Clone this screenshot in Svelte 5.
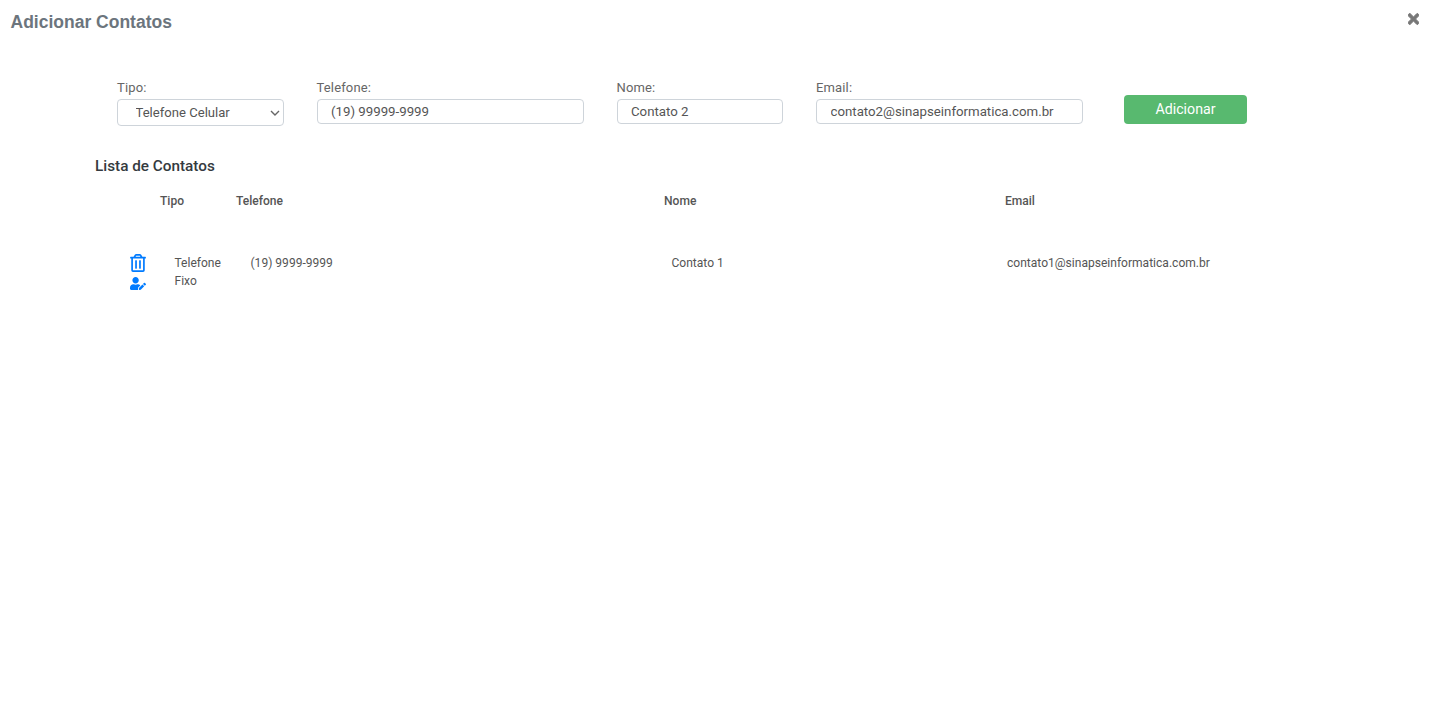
<script>
	let tipo = $state('Telefone Celular');
	let telefone = $state('(19) 99999-9999');
	let nome = $state('Contato 2');
	let email = $state('contato2@sinapseinformatica.com.br');

	const contatos = [
		{ tipo: 'Telefone Fixo', telefone: '(19) 9999-9999', nome: 'Contato 1', email: 'contato1@sinapseinformatica.com.br' }
	];
</script>

<div class="modal">
	<header>
		<h1>Adicionar Contatos</h1>
		<button class="close" aria-label="Fechar">
			<svg viewBox="0 0 352 512" width="11" height="16">
				<path fill="currentColor" stroke="currentColor" stroke-width="30" d="M242.72 256l100.07-100.07c12.28-12.28 12.28-32.19 0-44.48l-22.24-22.24c-12.28-12.28-32.19-12.28-44.48 0L176 189.28 75.93 89.21c-12.28-12.28-32.19-12.28-44.48 0L9.21 111.45c-12.28 12.28-12.28 32.19 0 44.48L109.28 256 9.21 356.07c-12.28 12.28-12.28 32.19 0 44.48l22.24 22.24c12.28 12.28 32.2 12.28 44.48 0L176 322.72l100.07 100.07c12.28 12.28 32.2 12.28 44.48 0l22.24-22.24c12.28-12.28 12.28-32.19 0-44.48L242.72 256z" />
			</svg>
		</button>
	</header>

	<form class="form">
		<label class="w-small">
			Tipo:
			<select bind:value={tipo}>
				<option>Telefone Celular</option>
				<option>Telefone Fixo</option>
			</select>
		</label>
		<label class="w-large">
			Telefone:
			<input type="text" bind:value={telefone} />
		</label>
		<label class="w-small">
			Nome:
			<input type="text" bind:value={nome} />
		</label>
		<label class="w-large">
			Email:
			<input type="text" bind:value={email} />
		</label>
		<button type="button" class="add">Adicionar</button>
	</form>

	<section class="list">
		<h2>Lista de Contatos</h2>
		<div class="row head">
			<span></span>
			<span>Tipo</span>
			<span>Telefone</span>
			<span>Nome</span>
			<span>Email</span>
		</div>
		{#each contatos as c}
			<div class="row item">
				<div class="actions">
					<svg viewBox="0 0 448 512" width="16" height="18">
						<path fill="currentColor" d="M268 416h24a12 12 0 0 0 12-12V188a12 12 0 0 0-12-12h-24a12 12 0 0 0-12 12v216a12 12 0 0 0 12 12zM432 80h-82.41l-34-56.7A48 48 0 0 0 274.41 0H173.59a48 48 0 0 0-41.16 23.3L98.41 80H16A16 16 0 0 0 0 96v16a16 16 0 0 0 16 16h16v336a48 48 0 0 0 48 48h288a48 48 0 0 0 48-48V128h16a16 16 0 0 0 16-16V96a16 16 0 0 0-16-16zM171.84 50.91A6 6 0 0 1 177 48h94a6 6 0 0 1 5.15 2.91L293.61 80H154.39zM368 464H80V128h288zm-212-48h24a12 12 0 0 0 12-12V188a12 12 0 0 0-12-12h-24a12 12 0 0 0-12 12v216a12 12 0 0 0 12 12z" />
					</svg>
					<svg viewBox="0 0 640 512" width="16" height="13">
						<path fill="currentColor" d="M224 256c70.7 0 128-57.3 128-128S294.7 0 224 0 96 57.3 96 128s57.3 128 128 128zm89.6 32h-16.7c-22.2 10.2-46.9 16-72.9 16s-50.6-5.8-72.9-16h-16.7C60.2 288 0 348.2 0 422.4V464c0 26.5 21.5 48 48 48h274.9c-2.4-6.8-3.4-14-2.6-21.3l6.8-60.9 1.2-11.1 7.9-7.9 77.3-77.3c-24.5-27.7-60-45.5-99.9-45.5zm45.3 145.3l-6.8 61c-1.1 10.2 7.5 18.8 17.6 17.6l60.9-6.8 137.9-137.9-71.7-71.7-137.9 137.8zM633 268.9L595.1 231c-9.3-9.3-24.5-9.3-33.8 0l-37.8 37.8-4.1 4.1 71.8 71.7 41.8-41.8c9.3-9.4 9.3-24.5 0-33.9z" />
					</svg>
				</div>
				<span class="tipo">{c.tipo}</span>
				<span class="tel">{c.telefone}</span>
				<span class="nome">{c.nome}</span>
				<span class="mail">{c.email}</span>
			</div>
		{/each}
	</section>
</div>

<style>
	:global(body) {
		background: #fff;
	}

	.modal {
		font-family: Roboto, 'Liberation Sans', sans-serif;
		color: #555;
		min-height: 710px;
	}

	header {
		display: flex;
		justify-content: space-between;
		align-items: center;
		padding: 12px 12px 0 10.5px;
	}

	h1 {
		margin: 0;
		font-family: 'Liberation Sans', Arial, sans-serif;
		font-size: 17.5px;
		line-height: 20px;
		font-weight: 700;
		color: #6c757d;
	}

	.close {
		display: flex;
		padding: 0;
		border: 0;
		background: none;
		color: #777;
		margin-top: -6px;
	}

	.form {
		display: flex;
		align-items: flex-start;
		gap: 33px;
		padding: 48px 0 0 117px;
	}

	label {
		display: flex;
		flex-direction: column;
		gap: 4px;
		font-size: 13px;
		line-height: 15px;
		color: #666;
		letter-spacing: 0.15px;
	}

	.w-small {
		width: 166.5px;
	}

	.w-large {
		width: 267px;
	}

	input,
	select {
		box-sizing: border-box;
		width: 100%;
		height: 25px;
		padding: 0 13.5px;
		border: 1px solid #ced4da;
		border-radius: 4px;
		background-color: #fff;
		font-family: inherit;
		font-size: 13.25px;
		letter-spacing: 0;
		color: #555;
	}

	select {
		height: 27px;
		padding-left: 17.5px;
		font-size: 13.1px;
		appearance: none;
		background-image: url("data:image/svg+xml,%3Csvg xmlns='http://www.w3.org/2000/svg' width='10' height='6' viewBox='0 0 10 6'%3E%3Cpath d='M1 1l4 4 4-4' fill='none' stroke='%23666' stroke-width='1.4'/%3E%3C/svg%3E");
		background-repeat: no-repeat;
		background-position: right 3px center;
	}

	.add {
		width: 123px;
		height: 29px;
		margin: 15px 0 0 8px;
		padding: 0 0 2px;
		border: 0;
		border-radius: 4px;
		background: #58b96f;
		color: #fff;
		font-family: inherit;
		font-size: 14.2px;
	}

	.list {
		padding: 31px 0 0 95px;
	}

	h2 {
		margin: 0;
		font-size: 15.3px;
		line-height: 18px;
		font-weight: 500;
		color: #343a40;
	}

	.row {
		display: grid;
		grid-template-columns: 65px 76px 428px 341px 1fr;
		font-size: 12.05px;
		line-height: 18px;
	}

	.head {
		margin-top: 17px;
		font-weight: 500;
		color: #555;
	}

	.item {
		margin-top: 44px;
		color: #555;
	}

	.actions {
		display: flex;
		flex-direction: column;
		align-items: center;
		gap: 5px;
		width: 16px;
		margin: 0 0 0 35px;
		color: #007bff;
	}

	.tipo,
	.tel {
		padding-left: 14.5px;
	}

	.nome {
		padding-left: 7.5px;
	}

	.mail {
		padding-left: 2px;
	}
</style>
